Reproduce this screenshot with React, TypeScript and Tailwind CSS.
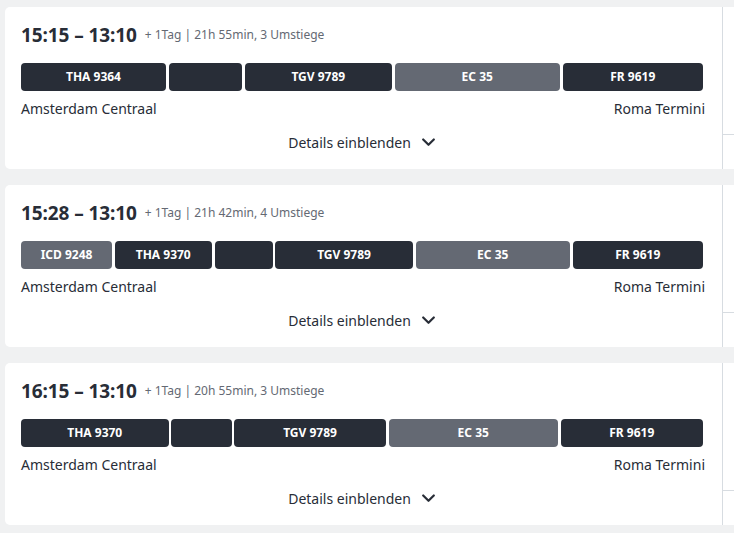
import React from "react";

type Seg = { label: string; w: number; gray?: boolean };
type Trip = { time: string; info: string; segs: Seg[] };

const trips: Trip[] = [
  {
    time: "15:15 – 13:10",
    info: "+ 1Tag | 21h 55min, 3 Umstiege",
    segs: [
      { label: "THA 9364", w: 145 },
      { label: "", w: 73.5 },
      { label: "TGV 9789", w: 147.5 },
      { label: "EC 35", w: 165.5, gray: true },
      { label: "FR 9619", w: 140.5 },
    ],
  },
  {
    time: "15:28 – 13:10",
    info: "+ 1Tag | 21h 42min, 4 Umstiege",
    segs: [
      { label: "ICD 9248", w: 91, gray: true },
      { label: "THA 9370", w: 97.5 },
      { label: "", w: 58 },
      { label: "TGV 9789", w: 138 },
      { label: "EC 35", w: 154.5, gray: true },
      { label: "FR 9619", w: 130.5 },
    ],
  },
  {
    time: "16:15 – 13:10",
    info: "+ 1Tag | 20h 55min, 3 Umstiege",
    segs: [
      { label: "THA 9370", w: 147.5 },
      { label: "", w: 60.5 },
      { label: "TGV 9789", w: 152 },
      { label: "EC 35", w: 169.5, gray: true },
      { label: "FR 9619", w: 142.5 },
    ],
  },
];

function Chevron() {
  return (
    <svg width="13" height="9" viewBox="0 0 13 9" className="ml-[11px]">
      <path d="M1.2 1.5 L6.5 6.8 L11.8 1.5" fill="none" stroke="#282d37" strokeWidth="2.2" strokeLinecap="round" strokeLinejoin="round" />
    </svg>
  );
}

function Card({ trip }: { trip: Trip }) {
  return (
    <div className="flex h-[162px] w-[930px] shrink-0 rounded-[5px] bg-white">
      <div className="flex w-[717px] shrink-0 flex-col px-4 pt-4">
        <div className="flex h-6 items-center">
          <span className="text-[19px] font-bold leading-6 tracking-[-0.1px] text-[#282d37]">{trip.time}</span>
          <span className="ml-[8px] text-[12px] leading-4 text-[#646973]">{trip.info}</span>
        </div>
        <div className="mt-4 flex h-[28px] gap-[2.5px]">
          {trip.segs.map((s, i) => (
            <div
              key={i}
              style={{ width: s.w }}
              className={
                "flex shrink-0 items-center justify-center rounded-[4px] text-[12px] font-bold text-white " +
                (s.gray ? "bg-[#646973]" : "bg-[#282d37]")
              }
            >
              {s.label}
            </div>
          ))}
        </div>
        <div className="mt-[7px] flex h-5 items-center justify-between pr-[1px] text-[14px] text-[#282d37]">
          <span>Amsterdam Centraal</span>
          <span>Roma Termini</span>
        </div>
        <div className="mt-[14px] flex h-5 items-center justify-center pr-[4px] text-[14px] text-[#282d37]">
          <span>Details einblenden</span>
          <Chevron />
        </div>
      </div>
      <div className="flex flex-1 flex-col border-l border-[#d7dce1]">
        <div className="h-[128px] border-b border-[#d7dce1]" />
        <div className="flex-1" />
      </div>
    </div>
  );
}

export default function App() {
  return (
    <div
      className="flex h-[533px] w-[734px] flex-col gap-4 overflow-hidden bg-[#f0f1f2] pl-[5px] pt-[7px]"
      style={{ fontFamily: '"Noto Sans", "Open Sans", sans-serif' }}
    >
      {trips.map((t, i) => (
        <Card key={i} trip={t} />
      ))}
    </div>
  );
}
